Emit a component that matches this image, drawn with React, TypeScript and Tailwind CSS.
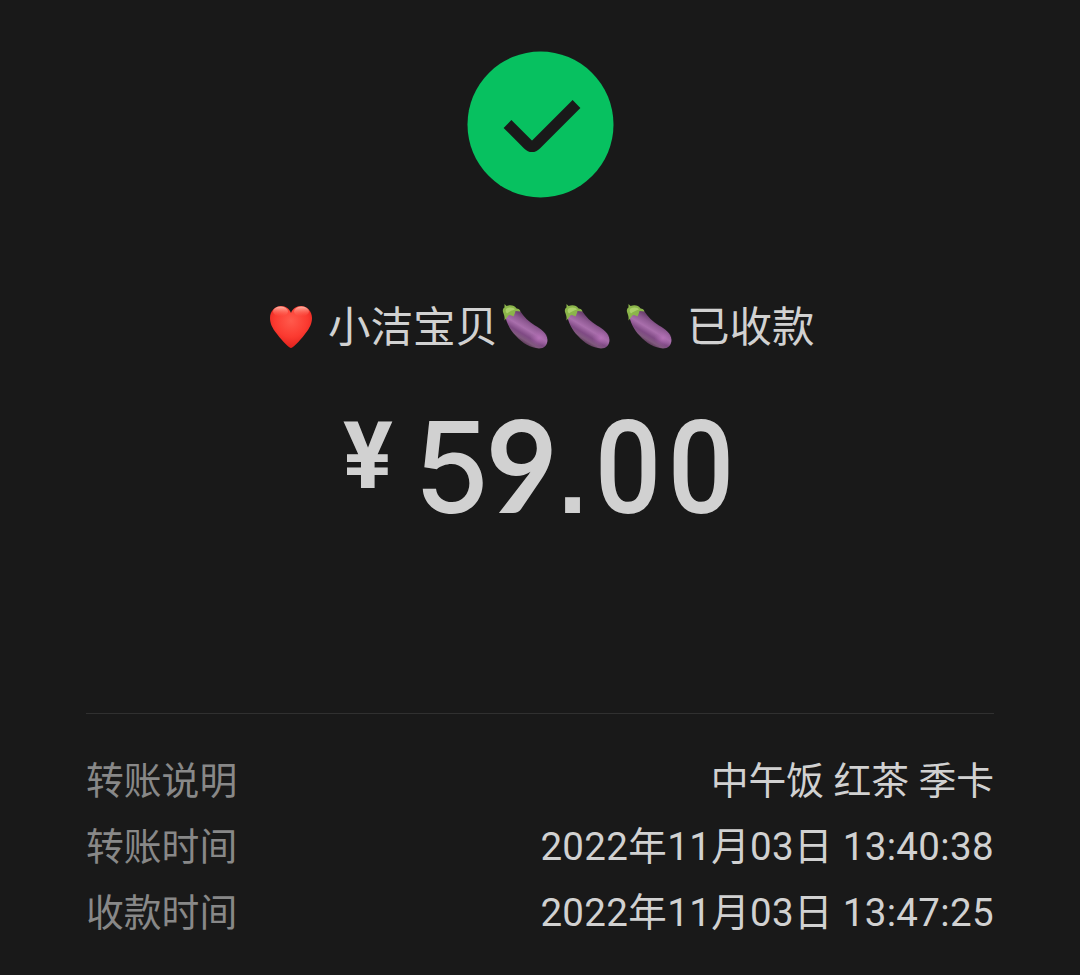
import React from 'react';

interface DetailRow {
  label: string;
  value: string;
  numeric?: boolean;
}

const details: DetailRow[] = [
  { label: '转账说明', value: '中午饭 红茶 季卡' },
  { label: '转账时间', value: '2022年11月03日 13:40:38', numeric: true },
  { label: '收款时间', value: '2022年11月03日 13:47:25', numeric: true },
];

function SuccessIcon() {
  return (
    <svg className="block h-[147px] w-[147px]" viewBox="0 0 147 147" fill="none">
      <circle cx="73.5" cy="73.5" r="73" fill="#07c160" />
      <path
        d="M40.500 73 L61 93.500 Q65 97.500 69 93.500 L109.500 53"
        stroke="#191919"
        strokeWidth="11"
      />
    </svg>
  );
}

function Heart() {
  return (
    <svg className="h-[44px] w-[44px] shrink-0" viewBox="0 0 44 44">
      <defs>
        <radialGradient id="heartFill" cx="0.5" cy="0.35" r="0.65">
          <stop offset="0" stopColor="#ff5a4c" />
          <stop offset="0.6" stopColor="#fb3a30" />
          <stop offset="1" stopColor="#e0211c" />
        </radialGradient>
        <linearGradient id="heartShine" x1="0" y1="0" x2="0" y2="1">
          <stop offset="0" stopColor="#ffc4b4" stopOpacity="0.9" />
          <stop offset="1" stopColor="#ff6a58" stopOpacity="0" />
        </linearGradient>
      </defs>
      <path
        d="M22 43 C20.500 43 14 37 8 29 C3 23 1 18 1 13 C1 6 6 1 12 1 C17 1 20.500 4 22 8 C23.500 4 27 1 32 1 C38 1 43 6 43 13 C43 18 41 23 36 29 C30 37 23.500 43 22 43 Z"
        fill="url(#heartFill)"
      />
      <ellipse cx="11.500" cy="6.500" rx="7.500" ry="5" fill="url(#heartShine)" />
      <ellipse cx="32.500" cy="6.500" rx="7.500" ry="5" fill="url(#heartShine)" />
    </svg>
  );
}

function Eggplant() {
  return (
    <svg className="h-[46px] w-[46px] shrink-0" viewBox="0 0 46 46">
      <defs>
        <linearGradient id="eggplantFill" gradientUnits="userSpaceOnUse" x1="31" y1="17" x2="19" y2="37">
          <stop offset="0" stopColor="#6d4271" />
          <stop offset="0.2" stopColor="#8f5a93" />
          <stop offset="0.45" stopColor="#a96fac" />
          <stop offset="0.7" stopColor="#7f4a84" />
          <stop offset="0.88" stopColor="#81597f" />
          <stop offset="1" stopColor="#62405f" />
        </linearGradient>
        <radialGradient id="eggplantGlow" cx="0.5" cy="0.5" r="0.5">
          <stop offset="0" stopColor="#b873b9" stopOpacity="0.9" />
          <stop offset="1" stopColor="#a160a5" stopOpacity="0" />
        </radialGradient>
      </defs>
      <path
        d="M2.500 9 C4 18 8 26 14 32 C20 39 29 44 37 44.500 C42 44.500 45.500 41 45.500 36 C45 29 39 25 33 21.500 C27 18 22 13 18 7 C13 2 4 2 2.500 9 Z"
        fill="url(#eggplantFill)"
      />
      <ellipse cx="37" cy="34" rx="9" ry="8" fill="url(#eggplantGlow)" />
      <path
        d="M2.500 0 L4.500 2 C9 0.500 12.500 1.500 14.500 4.500 C16.500 4.500 18 5.500 18.500 7.500 L13.500 7 C13 9 12.500 10.500 11.500 12.500 C9.500 11.500 8.500 11 7 11 C5 13 4 15 2.500 16.500 C3 13 2 11 1 8 C0.500 6 1 4.500 2.500 3.500 Z"
        fill="#8bb54a"
      />
      <path d="M4.500 4.500 C8 2.500 12 3.500 13 5.500 C10 6.500 7 7.500 5 9.500 C3.500 8 3 6 4.500 4.500 Z" fill="#abd069" />
    </svg>
  );
}

export default function App() {
  return (
    <div className="flex h-[975px] w-[1080px] flex-col items-center overflow-hidden bg-[#191919] pt-[51px] font-['Roboto','Noto_Sans_CJK_SC',sans-serif] text-[#d1d1d1]">
      <SuccessIcon />

      {/* Receiver */}
      <div className="mt-[97px] flex h-[64px] w-[542px] items-center text-[42.500px] leading-[64px] whitespace-nowrap">
        <Heart />
        <span className="mt-[1px] ml-[15px]">小洁宝贝</span>
        <span className="ml-[4px] flex gap-[16px]">
          <Eggplant />
          <Eggplant />
          <Eggplant />
        </span>
        <span className="mt-[1px] ml-[15px]">已收款</span>
      </div>

      {/* Amount */}
      <div className="mt-[35px] flex h-[150px] w-[394px] items-start font-medium whitespace-nowrap">
        <span className="mt-[16px] w-[83px] text-[93px] leading-none font-bold">¥</span>
        <span className="-mt-[6px] flex items-baseline text-[130px] leading-[150px]">
          <span className="w-[72px] origin-left scale-x-[0.96] font-['Inter'] text-[127px]">5</span>
          <span className="w-[68px] origin-left scale-x-[0.96] font-['Lato'] text-[129px] font-bold">9</span>
          <span className="w-[37px] text-center font-['Liberation_Sans'] text-[105px] font-bold">.</span>
          <span className="w-[73px] scale-x-[0.9]">0</span>
          <span className="w-[73px] scale-x-[0.9]">0</span>
        </span>
      </div>

      {/* Transfer details */}
      <div className="mt-[169px] w-[908px] border-t border-[#303030] pt-[34px] text-[37.800px]">
        {details.map((row) => (
          <div key={row.label} className="flex h-[66px] items-center justify-between leading-[66px] whitespace-nowrap">
            <span className="text-[#888888]">{row.label}</span>
            <span className={row.numeric ? 'text-[38.500px] tracking-[0.35px]' : ''}>{row.value}</span>
          </div>
        ))}
      </div>
    </div>
  );
}
